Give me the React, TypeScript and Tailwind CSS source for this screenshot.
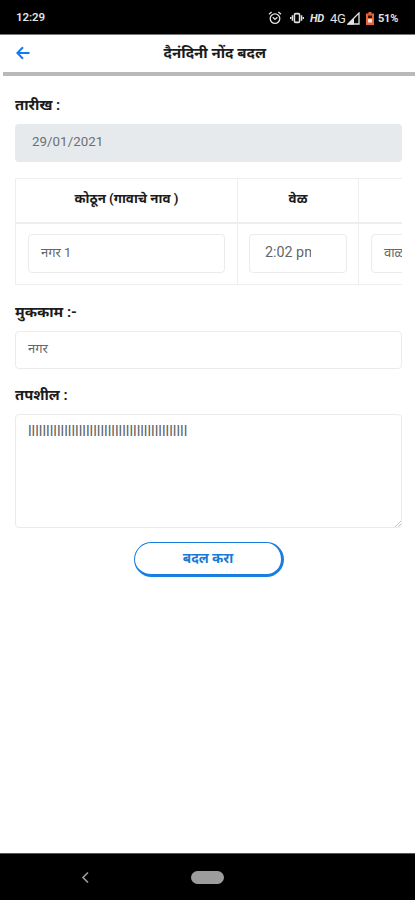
import { ReactNode } from "react";

const DETAILS = "l".repeat(44);

function StatusBar() {
  return (
    <div className="flex h-[35px] shrink-0 items-center bg-black pl-4 pr-[16px] pt-[2px] text-[#e2e2e2] border-b border-[#777]">
      <span className="text-[11.5px] font-semibold tracking-[-0.1px]">12:29</span>
      <div className="ml-auto flex items-center">
        {/* alarm */}
        <svg width="14" height="14" viewBox="0 0 14 14" fill="none" stroke="currentColor" strokeWidth="1.3">
          <circle cx="7" cy="7.6" r="4.8" />
          <path d="M1 3.2 3.6 1M13 3.2 10.4 1M4.8 6.2 7 8.4l2.4-2.2" />
        </svg>
        {/* vibrate */}
        <svg className="ml-[8px]" width="14" height="14" viewBox="0 0 14 14" fill="none" stroke="currentColor" strokeWidth="1.6">
          <rect x="4.4" y="2.6" width="5.2" height="8.8" rx="1.4" />
          <path d="M2.4 4.3v5.4M.6 6v2M11.6 4.3v5.4M13.4 6v2" strokeWidth="1.4" />
        </svg>
        <span className="ml-[6px] w-[16px] text-[11px] font-bold italic leading-none tracking-[-0.2px]">HD</span>
        <span className="ml-[4px] w-[17px] text-[13px] leading-none tracking-[-0.3px]">4G</span>
        <svg width="13" height="13" viewBox="0 0 13 13">
          <path d="M1 12 12 1v11z" fill="none" stroke="currentColor" strokeWidth="1.3" />
          <path d="M.5 12.5 7 6v6.5z" fill="currentColor" />
        </svg>
        <svg className="ml-[6px]" width="8" height="13" viewBox="0 0 8 13">
          <path d="M2.5 0h3v1.5H8V13H0V1.5h2.5z" fill="#e2653c" />
          <path d="M2 3.5h4V6H2z" fill="#3a1206" />
          <path d="M2 7h4v3.5H2z" fill="#f7e9e2" />
        </svg>
        <span className="ml-[4px] w-[21px] text-[11px] font-bold leading-none tracking-[-0.2px]">51%</span>
      </div>
    </div>
  );
}

function Header() {
  return (
    <header className="shrink-0">
      <div className="flex h-[37px] items-center pl-4 pr-[149px]">
        <svg className="-mt-[2px]" width="14" height="14" viewBox="0 0 14 14" fill="none" stroke="#0f7bf2" strokeWidth="2">
          <path d="M13.5 7H1.5M7 1.2 1.3 7 7 12.8" />
        </svg>
        <h1 className="ml-auto whitespace-nowrap text-[15px] font-bold leading-none text-[#1b1b1b]">
          दैनंदिनी नोंद बदल
        </h1>
      </div>
      <div className="ml-[3px] h-[4px] bg-[#b9b9b9]" />
    </header>
  );
}

function Label({ children }: { children: ReactNode }) {
  return <div className="flex h-5 items-center whitespace-nowrap text-[14.8px] font-bold text-[#1c1c1c]">{children}</div>;
}

function Field({ className = "", children }: { className?: string; children: ReactNode }) {
  return (
    <div className={`flex items-center overflow-hidden whitespace-nowrap rounded-[4px] border border-[#e9ebed] pb-[3px] pl-3 text-[13px] text-[#62676c] ${className}`}>
      {children}
    </div>
  );
}

function EntryTable() {
  return (
    <div className="mt-[16px] overflow-hidden">
      <table className="w-[580px] table-fixed border-collapse text-[13.3px]">
        <colgroup>
          <col className="w-[222px]" />
          <col className="w-[121px]" />
          <col />
        </colgroup>
        <thead>
          <tr className="h-[44px] text-[#1c1c1c]">
            <th className="border border-b-2 border-[#eceeef] p-0 pb-[2px] font-bold">कोठून (गावाचे नाव )</th>
            <th className="border border-b-2 border-[#eceeef] p-0 pb-[2px] font-bold">वेळ</th>
            <th className="border border-b-2 border-[#eceeef] p-0" />
          </tr>
        </thead>
        <tbody>
          <tr className="h-[62px]">
            <td className="border border-[#eceeef] px-3 py-0">
              <Field className="h-[39px]">नगर 1</Field>
            </td>
            <td className="border border-[#eceeef] px-[11px] py-0">
              <Field className="h-[39px] pl-[15px]">
                <span className="w-[46px] overflow-hidden text-[14.3px]">2:02 pm</span>
              </Field>
            </td>
            <td className="border border-[#eceeef] px-3 py-0">
              <Field className="h-[39px]">वाळकी</Field>
            </td>
          </tr>
        </tbody>
      </table>
    </div>
  );
}

export default function App() {
  return (
    <div className="flex h-[900px] w-[415px] flex-col overflow-hidden bg-white font-[Roboto,'Noto_Sans_Devanagari','Noto_Sans',sans-serif]">
      <StatusBar />
      <Header />
      <main className="flex flex-1 flex-col px-[15px] pr-[13px] pt-[19px]">
        <Label>तारीख :</Label>
        <div className="mt-[9px] flex h-[38px] items-center rounded-[4px] bg-[#e7eaec] pb-[3px] pl-[17px] text-[13.3px] tracking-[0.05px] text-[#6b7075]">
          29/01/2021
        </div>
        <EntryTable />
        <div className="mt-[17px]">
          <Label>मुककाम :-</Label>
        </div>
        <Field className="mt-[9px] h-[38px]">नगर</Field>
        <div className="mt-[16px]">
          <Label>तपशील :</Label>
        </div>
        <div className="relative mt-[9px] h-[114px] overflow-hidden rounded-[4px] border border-[#e9ebed] pl-3 pt-[6px] text-[14.9px] leading-[20px] text-[#60666a]">
          {DETAILS}
          <svg className="absolute bottom-0 right-0" width="6" height="6" viewBox="0 0 6 6" stroke="#c4c4c4">
            <path d="M0 6 6 0M3 6l3-3" />
          </svg>
        </div>
        <button className="ml-[119px] mt-[14px] h-[35px] w-[150px] rounded-full border border-b-[3px] border-r-[3px] border-[#1a7ee0] text-[13.5px] font-bold text-[#1a78d6]">
          बदल करा
        </button>
      </main>
      <nav className="flex h-[47px] shrink-0 items-center border-t border-[#555] bg-black pl-[81px]">
        <svg width="8" height="13" viewBox="0 0 8 13" fill="none" stroke="#9a9a9a" strokeWidth="1.7">
          <path d="M7 1.5 2 6.5l5 5" />
        </svg>
        <div className="ml-[102px] h-[13px] w-[33px] rounded-full bg-[#9c9c9c]" />
      </nav>
    </div>
  );
}
